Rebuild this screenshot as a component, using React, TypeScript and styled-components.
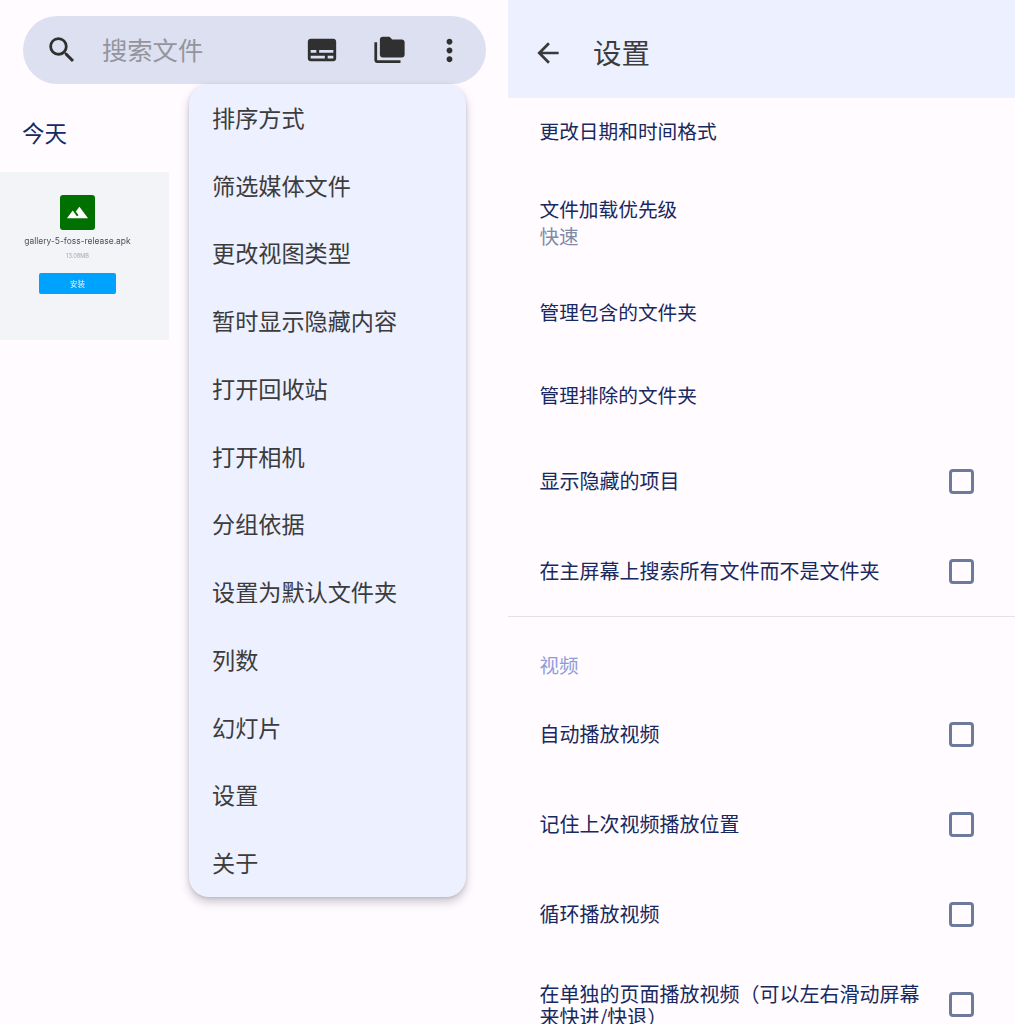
import React from "react";
import styled, { createGlobalStyle } from "styled-components";
import { MdSearch, MdSubtitles, MdFolderCopy, MdMoreVert, MdArrowBack, MdTerrain } from "react-icons/md";

const Global = createGlobalStyle`
  html, body { margin: 0; padding: 0; background: #fffbff; }
  * { box-sizing: border-box; }
  svg { flex: none; }
`;

const cjk = `"Noto Sans CJK SC", "Noto Sans", sans-serif`;

const Page = styled.div`
  display: grid;
  grid-template-columns: 508px 507px;
  width: 1015px;
  height: 1024px;
  overflow: hidden;
  background: #fffbff;
  font-family: ${cjk};
`;

const LeftPane = styled.section`
  position: relative;
  display: flex;
  flex-direction: column;
  padding-top: 16px;
`;

const SearchBar = styled.div`
  display: flex;
  align-items: center;
  width: 463px;
  height: 68px;
  margin-left: 23px;
  padding-left: 22px;
  border-radius: 34px;
  background: #dce0f0;
  color: #303030;
`;

const SearchText = styled.span`
  margin-left: 23px;
  width: 203px;
  font-size: 25.3px;
  line-height: 1;
  color: #94959c;
`;

const BarIcon = styled.span<{ $w: number }>`
  display: flex;
  justify-content: center;
  width: ${(p) => p.$w}px;
`;

const DayLabel = styled.h2`
  margin: 33px 0 0 22px;
  height: 30px;
  font-size: 22.5px;
  line-height: 30px;
  font-weight: 400;
  color: #152a63;
`;

const Thumb = styled.div`
  display: flex;
  flex-direction: column;
  align-items: center;
  width: 169px;
  height: 168px;
  margin-top: 25px;
  padding: 23px 14px 0 0;
  background: #f3f4f8;
  filter: blur(0.35px);
`;

const AppIcon = styled.div`
  display: flex;
  align-items: center;
  justify-content: center;
  width: 35px;
  height: 35px;
  border-radius: 3px;
  background: #007000;
  color: #fff;
`;

const FileName = styled.div`
  margin-top: 5px;
  font-family: Inter, "Noto Sans", sans-serif;
  font-size: 8.45px;
  line-height: 12px;
  white-space: nowrap;
  color: #4c4f57;
`;

const FileSize = styled.div`
  margin-top: 5px;
  font-family: Inter, "Noto Sans", sans-serif;
  font-size: 5.6px;
  line-height: 8px;
  color: #a5a7ad;
`;

const InstallButton = styled.div`
  display: flex;
  align-items: center;
  justify-content: center;
  width: 77px;
  height: 21px;
  margin-top: 13px;
  border-radius: 2px;
  background: #00a2ff;
  color: #e6f5ff;
  font-size: 7.5px;
`;

const Menu = styled.ul`
  position: absolute;
  left: 189px;
  top: 84px;
  width: 277px;
  height: 813px;
  margin: 0;
  padding: 0;
  list-style: none;
  display: grid;
  grid-auto-rows: 1fr;
  background: #edf0ff;
  border-radius: 20px;
  box-shadow: 0 5px 10px rgba(50, 50, 70, 0.26), 0 1px 3px rgba(50, 50, 70, 0.14);
`;

const MenuItem = styled.li`
  display: flex;
  align-items: center;
  padding: 0 0 2px 23px;
  font-size: 23.15px;
  color: #3c3c3c;
`;

const RightPane = styled.section`
  display: flex;
  flex-direction: column;
`;

const Header = styled.header`
  flex: none;
  display: flex;
  align-items: center;
  height: 98px;
  padding: 8px 0 0 24px;
  background: #ecf0ff;
  color: #3a3a3a;
`;

const Title = styled.h1`
  margin: 0 0 2px 29px;
  font-size: 28.5px;
  line-height: 1;
  font-weight: 400;
  color: #3c3c3c;
`;

const Row = styled.div<{ $h: number; $pt?: number }>`
  flex: none;
  display: flex;
  align-items: center;
  justify-content: space-between;
  height: ${(p) => p.$h}px;
  padding: ${(p) => p.$pt ?? 0}px 41px 0 31.5px;
`;

const RowBody = styled.div`
  display: flex;
  flex-direction: column;
`;

const RowTitle = styled.div<{ $compact?: boolean }>`
  margin-bottom: 2px;
  font-size: ${(p) => (p.$compact ? "19.7px" : "20px")};
  line-height: 23px;
  color: #17295e;
`;

const WrappedTitle = styled.div`
  margin-top: 2px;
  width: 385px;
  font-size: 20px;
  line-height: 23px;
  color: #17295e;
`;

const RowSub = styled.div`
  margin-top: 2px;
  font-size: 19.5px;
  line-height: 23px;
  color: #8089a6;
`;

const Check = styled.span`
  flex: none;
  width: 25px;
  height: 25px;
  border: 3px solid #6c7a9e;
  border-radius: 4px;
`;

const Divider = styled.hr`
  flex: none;
  width: 100%;
  height: 1px;
  margin: 0;
  border: 0;
  background: #e4e2e6;
`;

const SectionLabel = styled.div`
  flex: none;
  height: 72px;
  padding: 36px 0 0 31.5px;
  font-size: 19.5px;
  line-height: 24px;
  color: #8e9dd8;
`;

const menuItems = [
  "排序方式", "筛选媒体文件", "更改视图类型", "暂时显示隐藏内容", "打开回收站", "打开相机",
  "分组依据", "设置为默认文件夹", "列数", "幻灯片", "设置", "关于",
];

export default function App() {
  return (
    <Page>
      <Global />
      <LeftPane>
        <SearchBar>
          <MdSearch size={34} />
          <SearchText>搜索文件</SearchText>
          <BarIcon $w={34}><MdSubtitles size={34} /></BarIcon>
          <BarIcon $w={101}><MdFolderCopy size={33} /></BarIcon>
          <BarIcon $w={18}><MdMoreVert size={35} /></BarIcon>
        </SearchBar>
        <DayLabel>今天</DayLabel>
        <Thumb>
          <AppIcon><MdTerrain size={23} /></AppIcon>
          <FileName>gallery-5-foss-release.apk</FileName>
          <FileSize>13.08MB</FileSize>
          <InstallButton>安装</InstallButton>
        </Thumb>
        <Menu>
          {menuItems.map((m) => <MenuItem key={m}>{m}</MenuItem>)}
        </Menu>
      </LeftPane>
      <RightPane>
        <Header>
          <MdArrowBack size={32} />
          <Title>设置</Title>
        </Header>
        <Row $h={66}><RowTitle $compact>更改日期和时间格式</RowTitle></Row>
        <Row $h={107} $pt={8}>
          <RowBody>
            <RowTitle $compact>文件加载优先级</RowTitle>
            <RowSub>快速</RowSub>
          </RowBody>
        </Row>
        <Row $h={83}><RowTitle $compact>管理包含的文件夹</RowTitle></Row>
        <Row $h={83}><RowTitle $compact>管理排除的文件夹</RowTitle></Row>
        <Row $h={89}><RowTitle>显示隐藏的项目</RowTitle><Check /></Row>
        <Row $h={90}><RowTitle>在主屏幕上搜索所有文件而不是文件夹</RowTitle><Check /></Row>
        <Divider />
        <SectionLabel>视频</SectionLabel>
        <Row $h={90}><RowTitle>自动播放视频</RowTitle><Check /></Row>
        <Row $h={90}><RowTitle>记住上次视频播放位置</RowTitle><Check /></Row>
        <Row $h={90}><RowTitle>循环播放视频</RowTitle><Check /></Row>
        <Row $h={90}>
          <WrappedTitle>在单独的页面播放视频（可以左右滑动屏幕来快进/快退）</WrappedTitle>
          <Check />
        </Row>
      </RightPane>
    </Page>
  );
}
